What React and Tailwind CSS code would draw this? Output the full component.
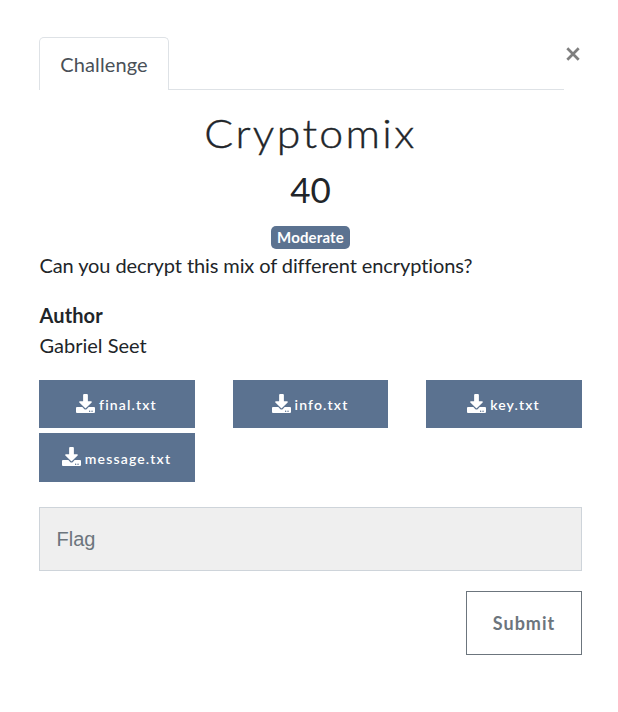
import React from "react";
import { FaDownload } from "react-icons/fa";

const files = ["final.txt", "info.txt", "key.txt", "message.txt"];

export default function App() {
  return (
    <div className="h-[712px] w-[618px] bg-white pt-[37px] pr-9 pl-[39px] font-['Lato',sans-serif] text-[20px] leading-[30px] text-[#212529] [font-variant-ligatures:none]">
      <div className="flex h-[53px] items-start">
        <div className="flex h-[53px] w-[525px]">
          <div className="h-[53px] w-[130px] rounded-t-[5px] border border-b-0 border-[#dee2e6] pt-[11px] text-center tracking-[0.1px] text-[#495057]">
            Challenge
          </div>
          <div className="flex-1 border-b border-[#dee2e6]" />
        </div>
        <button className="mt-[10px] ml-[2px] flex h-[14px] w-[14px] items-center justify-center" aria-label="Close">
          <svg className="h-[14px] w-[14px]" viewBox="0 0 14 14" fill="none" stroke="#7f7f7f" strokeWidth="2.7">
            <path d="M1.3 1.3 12.7 12.7M12.7 1.3 1.3 12.7" />
          </svg>
        </button>
      </div>

      <div className="flex w-[543px] flex-col">
        <h3 className="mt-[19px] scale-x-[1.07] text-center text-[40px] leading-[48px] font-light tracking-[2.2px] [-webkit-text-stroke:0.4px_#212529]">Cryptomix</h3>
        <h4 className="mt-[11px] text-center text-[35px] leading-[42px]">40</h4>
        <div className="mt-[16px] flex h-[23px] justify-center">
          <span className="h-[23px] w-[79px] rounded-[5px] bg-[#5b7290] text-center text-[15px] leading-[23px] font-bold tracking-[0.15px] text-white">
            Moderate
          </span>
        </div>
        <p className="mt-[1px] ml-[0.5px] tracking-[-0.1px]">Can you decrypt this mix of different encryptions?</p>
        <p className="mt-[20px] ml-[0.5px] font-bold tracking-[0.1px]">Author</p>
        <p className="ml-[0.5px]">Gabriel Seet</p>

        <div className="mt-5 grid grid-cols-[156px_155px_156px] grid-rows-[48px_49px] justify-between gap-y-[5px]">
          {files.map((name) => (
            <a key={name} className="flex items-center justify-center gap-1 bg-[#5b7290] text-[14px] font-semibold tracking-[1.15px] text-white">
              <FaDownload className="-ml-px mb-0.5 h-[19px] w-[19px]" />
              <span className="pt-0.5">{name}</span>
            </a>
          ))}
        </div>

        <input
          className="mt-[25px] h-[64px] w-full border border-[#ced4da] bg-[#efefef] pr-4 pl-[16.5px] font-['Liberation_Sans',Arial,sans-serif] text-[20px] placeholder:text-[#6c757d] placeholder:opacity-100"
          placeholder="Flag"
        />
        <button className="mt-5 h-[64px] w-[116px] self-end border border-[#6c757d] text-[18px] font-bold tracking-[1px] text-[#6c757d]">
          Submit
        </button>
      </div>
    </div>
  );
}
